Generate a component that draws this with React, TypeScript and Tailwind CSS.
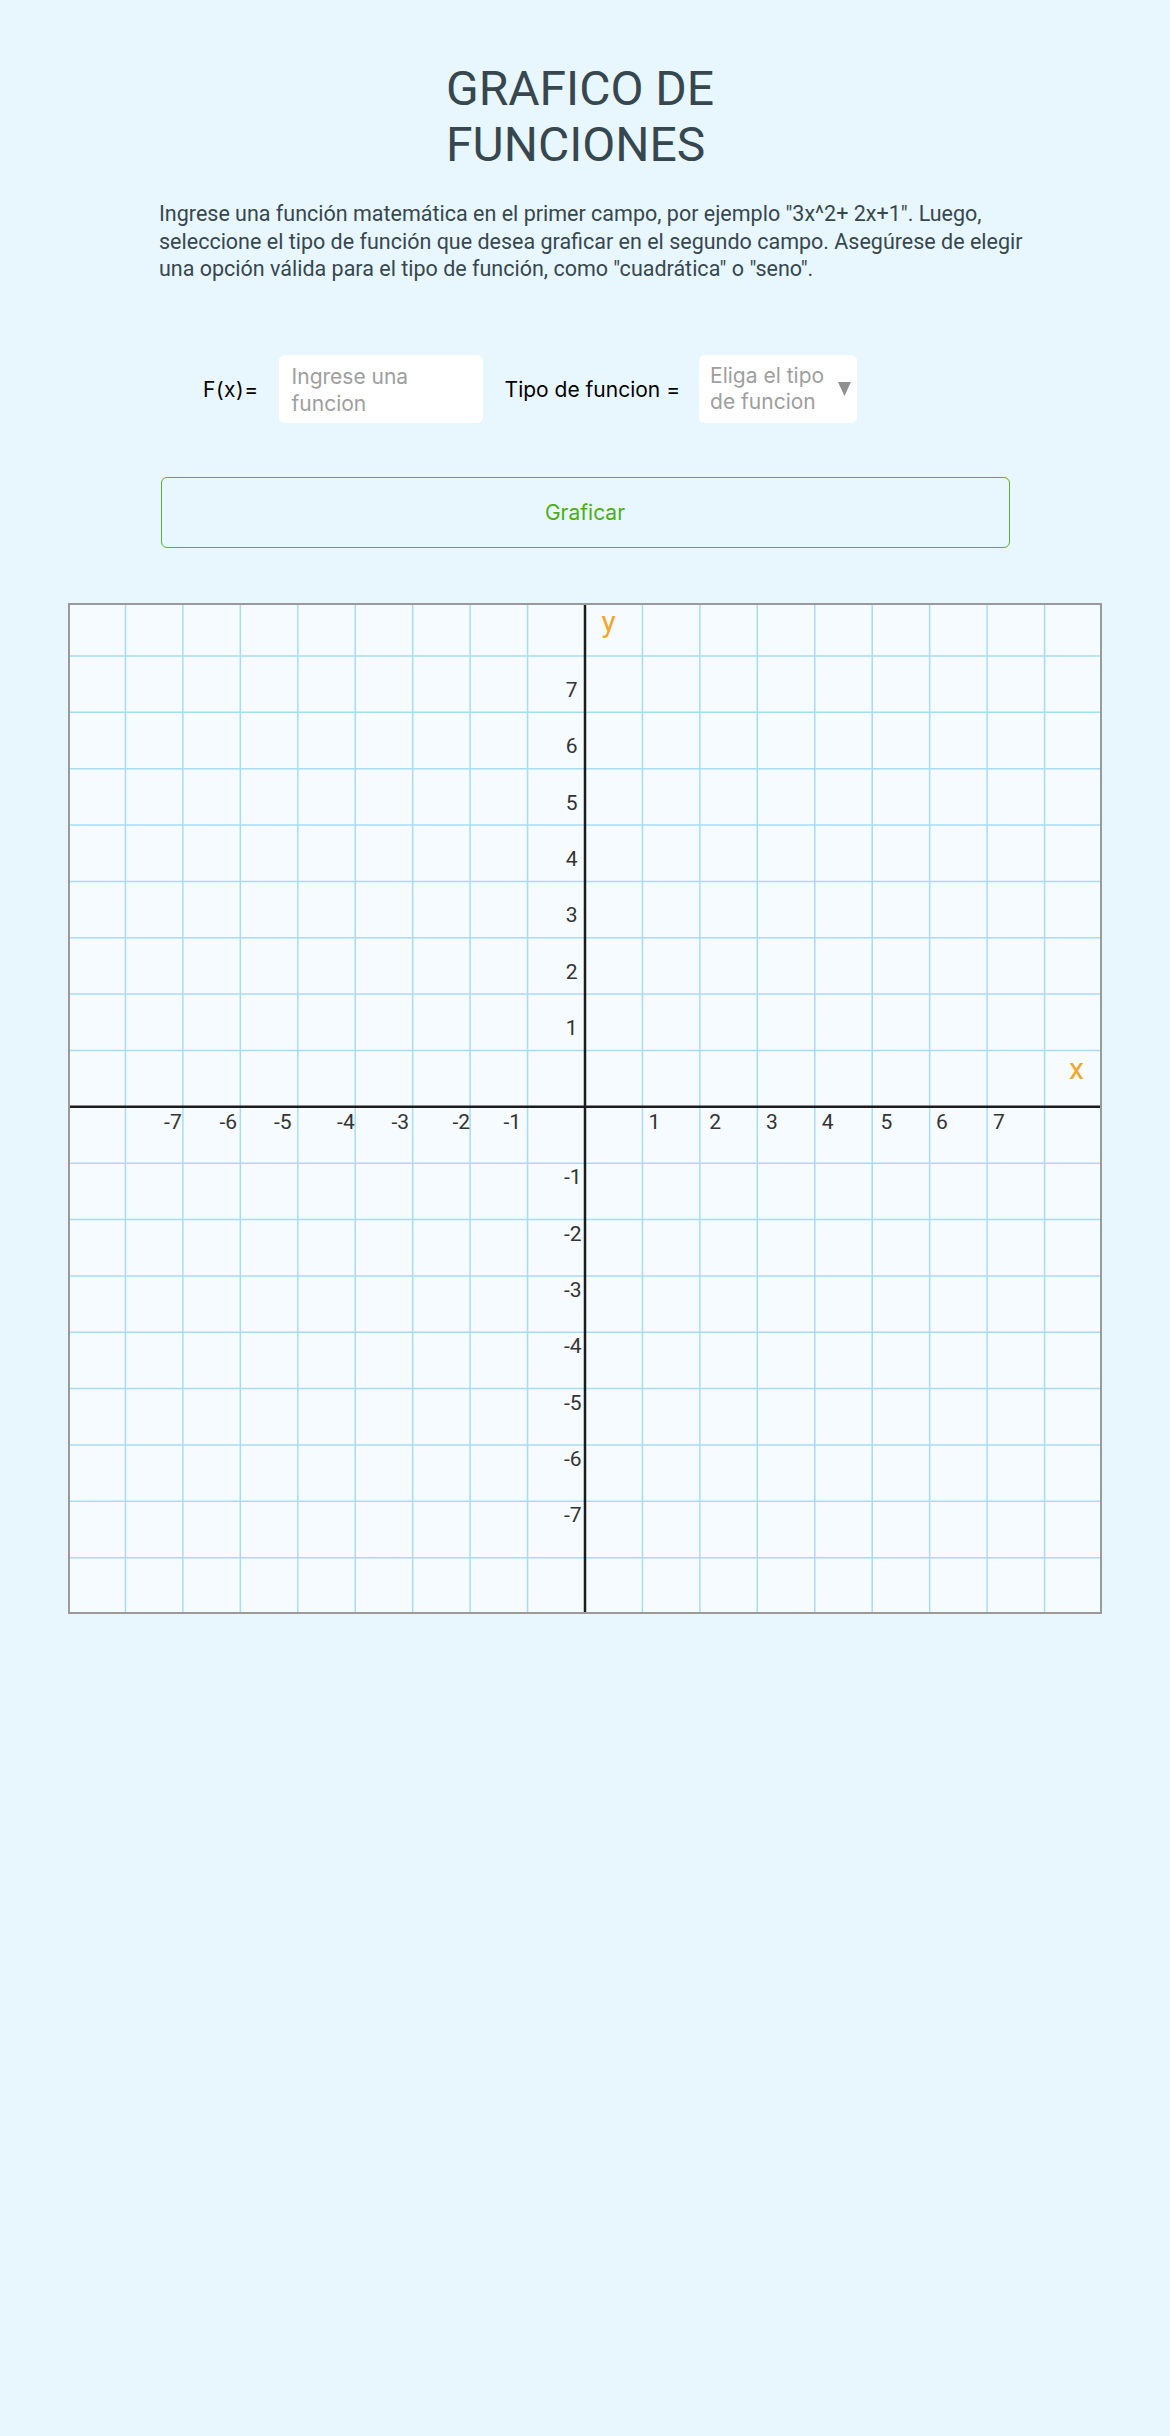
const COLS = 18
const COL_W = 1034 / COLS
const FIRST_ROW = 53
const ROW_H = (1011 - FIRST_ROW) / 17

// horizontal gridlines (first row is a bit shorter)
const rowLines = [0, ...Array.from({ length: 18 }, (_, k) => FIRST_ROW + k * ROW_H)]
const colLines = Array.from({ length: COLS + 1 }, (_, i) => i * COL_W)

const AXIS_X = 9 * COL_W
const AXIS_Y = rowLines[9]

const xPos = [580.6, 641.3, 698, 753.8, 812.4, 868, 924.9]
const xNegEnd = [113.7, 169, 223.5, 286.7, 341, 402, 453]

function Graph() {
  return (
    <svg
      width={1034}
      height={1011}
      viewBox="0 0 1034 1011"
      className="block font-['Roboto',sans-serif]"
    >
      <rect x={0} y={0} width={1034} height={1011} fill="#f5fbfe" />

      {colLines.slice(1, -1).map((x) => (
        <line key={`c${x}`} x1={x} y1={0} x2={x} y2={1011} stroke="#a8dcf4" strokeWidth={1.5} />
      ))}
      {rowLines.slice(1, -1).map((y) => (
        <line key={`r${y}`} x1={0} y1={y} x2={1034} y2={y} stroke="#a8dcf4" strokeWidth={1.5} />
      ))}

      {/* axes */}
      <line x1={AXIS_X} y1={0} x2={AXIS_X} y2={1011} stroke="#1c1c1c" strokeWidth={2.5} />
      <line x1={0} y1={AXIS_Y} x2={1034} y2={AXIS_Y} stroke="#1c1c1c" strokeWidth={2.5} />

      <rect x={1} y={1} width={1032} height={1009} fill="none" stroke="#9a9a9a" strokeWidth={2} />

      {/* x labels */}
      {xPos.map((x, i) => (
        <text key={`xp${i}`} x={x} y={525.5} fontSize={21} fill="#333">
          {i + 1}
        </text>
      ))}
      {xNegEnd.map((x, i) => (
        <text key={`xn${i}`} x={x} y={525.5} fontSize={21} fill="#333" textAnchor="end">
          {i - 7}
        </text>
      ))}

      {/* y labels */}
      {[7, 6, 5, 4, 3, 2, 1].map((n) => (
        <text key={`yp${n}`} x={509.5} y={rowLines[9 - n] - 15.5} fontSize={21} fill="#333" textAnchor="end">
          {n}
        </text>
      ))}
      {[1, 2, 3, 4, 5, 6, 7].map((n) => (
        <text key={`yn${n}`} x={513.5} y={rowLines[9 + n] + 21} fontSize={21} fill="#333" textAnchor="end">
          {-n}
        </text>
      ))}

      <text x={533.5} y={28.5} fontSize={30} fill="#f2a629">
        y
      </text>
      <text x={1001} y={476.3} fontSize={30} fill="#f2a629">
        x
      </text>
    </svg>
  )
}

export default function App() {
  return (
    <div className="min-h-[2436px] bg-[#e8f7fe] pt-[61px] pb-10 font-['Roboto',sans-serif]">
      {/* Title */}
      <h1 className="mx-auto w-[278px] whitespace-nowrap text-[48px] font-normal leading-[56px] text-[#37474f]">
        GRAFICO DE
        <br />
        FUNCIONES
      </h1>

      {/* Instructions */}
      <p className="ml-[159px] mt-[27px] w-[895px] text-[21.5px] leading-[27.6px] text-[#37474f]">
        Ingrese una función matemática en el primer campo, por ejemplo "3x^2+ 2x+1". Luego,
        seleccione el tipo de función que desea graficar en el segundo campo. Asegúrese de elegir
        una opción válida para el tipo de función, como "cuadrática" o "seno".
      </p>

      {/* Form */}
      <div className="mt-[72.5px] flex items-center pl-[203px] font-['Inter',sans-serif] text-[21px] text-black">
        <label className="tracking-[0.5px]">F(x)=</label>
        <div className="ml-[20px] h-[68px] w-[204px] rounded-[6px] bg-white pl-[13px] pt-[9px] leading-[26.5px] text-[#9e9e9e]">
          Ingrese una
          <br />
          funcion
        </div>
        <label className="ml-[22px]">Tipo de funcion =</label>
        <div className="ml-[19px] flex h-[68px] w-[158px] items-center rounded-[6px] bg-white pl-[11px] pr-[6px]">
          <span className="w-[126px] leading-[26.5px] text-[#9e9e9e]">
            Eliga el tipo
            <br />
            de funcion
          </span>
          <svg width="13" height="14" viewBox="0 0 13 14" className="ml-[3px]">
            <polygon points="0,0 13,0 6.5,14" fill="#8f8f8f" />
          </svg>
        </div>
      </div>

      <button className="mx-auto mt-[54px] block h-[71px] w-[849px] rounded-[6px] border-[1.5px] border-[#58b22b] font-['Inter',sans-serif] text-[21px] text-[#4cad16]">
        Graficar
      </button>

      {/* Plot */}
      <div className="mx-auto mt-[55px] w-[1034px]">
        <Graph />
      </div>
    </div>
  )
}
